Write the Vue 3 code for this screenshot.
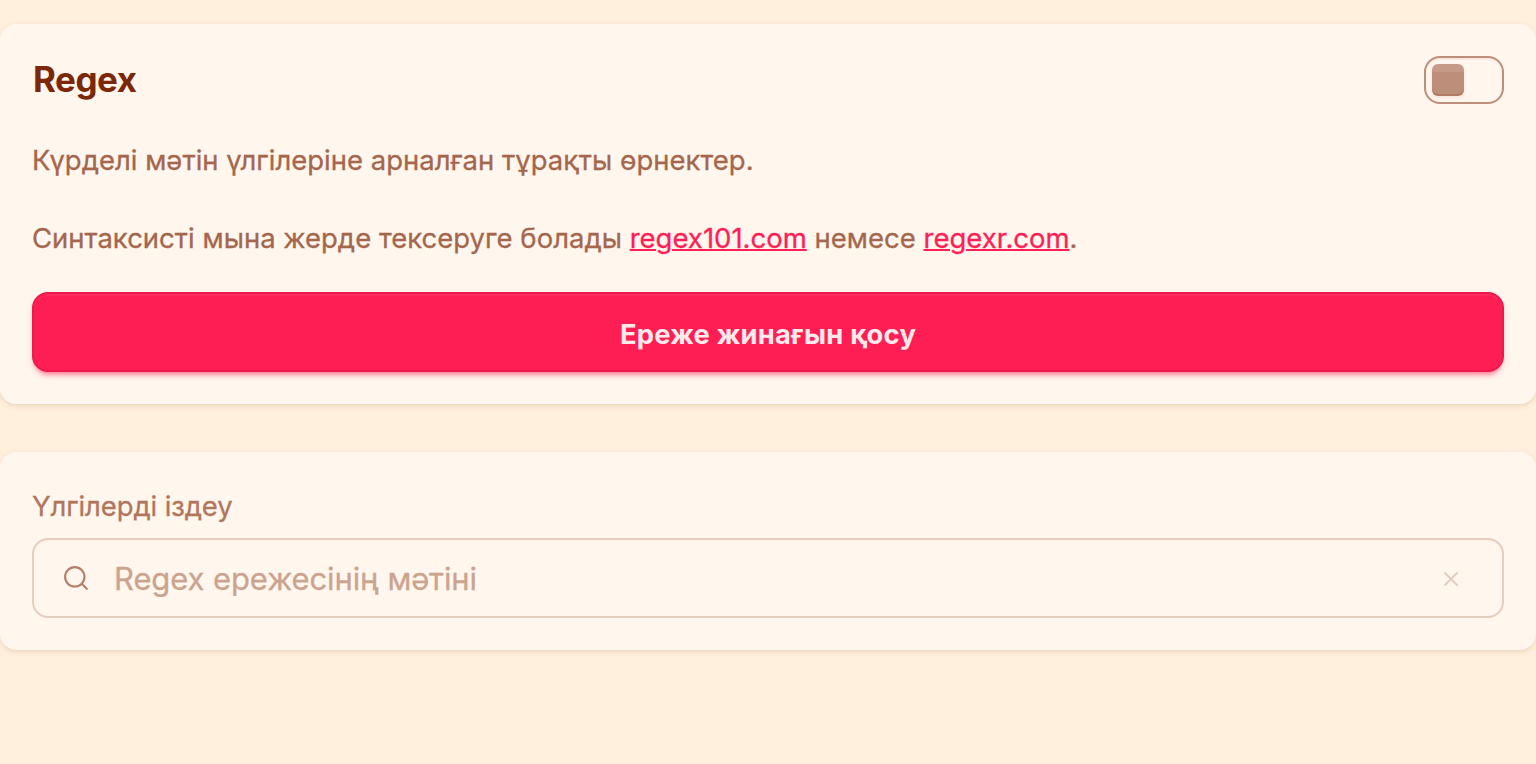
<template>
  <main class="page">
    <section class="card">
      <header class="card-header">
        <h2 class="title">Regex</h2>
        <button
          class="toggle"
          :class="{ on: enabled }"
          type="button"
          role="switch"
          :aria-checked="enabled"
          aria-label="Regex"
          @click="enabled = !enabled"
        >
          <span class="knob"></span>
        </button>
      </header>
      <p class="text">Күрделі мәтін үлгілеріне арналған тұрақты өрнектер.</p>
      <p class="text">
        Синтаксисті мына жерде тексеруге болады
        <a class="link" href="#">regex101.com</a> немесе
        <a class="link" href="#">regexr.com</a>.
      </p>
      <button class="btn" type="button">Ереже жинағын қосу</button>
    </section>

    <section class="card search-card">
      <label class="label" for="search">Үлгілерді іздеу</label>
      <div class="search">
        <svg class="search-icon" viewBox="0 0 24 24">
          <circle cx="10.8" cy="10.8" r="9.7" />
          <path d="M17.8 17.8 L23.4 23.4" />
        </svg>
        <input id="search" v-model="query" class="input" type="text" placeholder="Regex ережесінің мәтіні" />
        <button class="clear" type="button" aria-label="Тазалау" @click="query = ''">
          <svg class="clear-icon" viewBox="0 0 14 14">
            <path d="M1 1 L13 13 M13 1 L1 13" />
          </svg>
        </button>
      </div>
    </section>
  </main>
</template>

<script setup>
import { ref } from 'vue'

const enabled = ref(false)
const query = ref('')
</script>

<style>
body {
  background: #ffefdc;
}
</style>

<style scoped>
.page {
  box-sizing: border-box;
  min-height: 100vh;
  padding: 24px 0;
  display: flex;
  flex-direction: column;
  gap: 48px;
  background: #ffefdc;
  color: #7c2808;
  font-family: Inter, 'Liberation Sans', sans-serif;
}

.card {
  display: flex;
  flex-direction: column;
  gap: 32px;
  padding: 32px;
  border-radius: 16px;
  background: #fff6ed;
  box-shadow: 0 2px 6px rgba(90, 50, 10, 0.09), 0 2px 4px -2px rgba(90, 50, 10, 0.1);
}

.card-header {
  display: flex;
  align-items: center;
  justify-content: space-between;
  height: 48px;
}

.title {
  margin: 0;
  padding: 0 0 2px 1px;
  font-size: 35px;
  line-height: 46px;
  font-weight: 700;
  letter-spacing: -0.5px;
}

.toggle {
  box-sizing: border-box;
  width: 80px;
  height: 48px;
  padding: 6px;
  display: flex;
  border: 2px solid #bd8e79;
  border-radius: 16px;
  background: transparent;
  box-shadow: inset 0 2px rgba(189, 142, 121, 0.12);
  cursor: pointer;
}

.toggle.on {
  justify-content: flex-end;
}

.knob {
  width: 32px;
  height: 32px;
  border-radius: 6px;
  background: linear-gradient(#c59b88 8px, #bd8e79 8px);
  box-shadow: inset 0 -2px rgba(124, 40, 8, 0.18), 0 2px 3px rgba(189, 142, 121, 0.15);
}

.text {
  margin: 0;
  padding-top: 3px;
  color: #a4674d;
  font-size: 27.5px;
  line-height: 43px;
  -webkit-text-stroke: 0.3px;
}

.link {
  color: #ff1f57;
  text-decoration: underline;
  text-decoration-thickness: 2px;
}

.btn {
  box-sizing: border-box;
  height: 80px;
  padding: 4px 32px 0;
  border: 2px solid #ed184e;
  border-radius: 16px;
  background: #ff1e54;
  color: #ffe9eb;
  font-family: inherit;
  font-size: 27.3px;
  font-weight: 700;
  letter-spacing: 0.25px;
  box-shadow: inset 0 2px rgba(255, 255, 255, 0.06), 0 6px 5px -4px rgba(255, 30, 84, 0.4),
    0 4px 6px -2px rgba(255, 30, 84, 0.35);
  cursor: pointer;
}

.search-card {
  gap: 8px;
}

.label {
  padding-bottom: 1px;
  color: #b0765d;
  font-size: 27.5px;
  line-height: 45px;
  letter-spacing: -0.12px;
  -webkit-text-stroke: 0.3px;
}

.search {
  box-sizing: border-box;
  height: 80px;
  padding: 0 30px;
  display: flex;
  align-items: center;
  border: 2px solid #e5cdbe;
  border-radius: 16px;
  box-shadow: inset 0 2px rgba(124, 40, 8, 0.02);
}

.search-icon {
  flex: none;
  width: 24px;
  height: 24px;
  fill: none;
  stroke: #b57e67;
  stroke-width: 2.1;
}

.input {
  box-sizing: border-box;
  flex: 1;
  min-width: 0;
  height: 76px;
  margin-left: 26px;
  padding: 0;
  border: 0;
  outline: none;
  background: transparent;
  color: #7c2808;
  font-family: inherit;
  font-size: 31px;
  letter-spacing: -0.1px;
  -webkit-text-stroke: 0.3px;
}

.input::placeholder {
  color: #cba490;
  opacity: 1;
}

.clear {
  padding: 2px 0 0;
  margin-right: 14px;
  display: flex;
  border: 0;
  background: transparent;
  cursor: pointer;
}

.clear-icon {
  width: 14px;
  height: 14px;
  fill: none;
  stroke: #e5cdbe;
  stroke-width: 2;
  stroke-linecap: round;
}
</style>
